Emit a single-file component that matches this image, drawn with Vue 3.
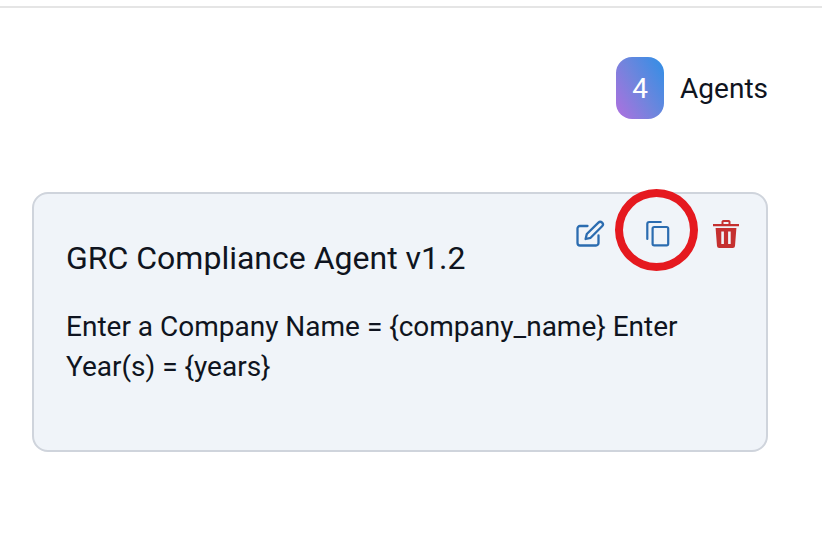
<script setup>
const title = 'GRC Compliance Agent v1.2'
const desc = 'Enter a Company Name = {company_name} Enter Year(s) = {years}'
</script>

<template>
  <div class="page">
    <div class="top-rule"></div>
    <div class="summary">
      <div class="badge">4</div>
      <span class="label">Agents</span>
    </div>
    <div class="card">
      <div class="actions">
        <button class="act edit" aria-label="Edit">
          <svg width="30" height="30" viewBox="0 0 30 30" fill="none" stroke="#2b6cb0" stroke-width="2.3" stroke-linecap="round" stroke-linejoin="round">
            <path d="M12.5 7H5a2.5 2.5 0 0 0-2.5 2.5V24A2.5 2.5 0 0 0 5 26.5H21a2.5 2.5 0 0 0 2.5-2.5V16.5"/>
            <path d="M23.4 3.6a2.6 2.6 0 0 1 3.7 3.7L15.6 18.8 10.6 20l1.2-5z"/>
          </svg>
        </button>
        <button class="act copy" aria-label="Copy">
          <svg width="30" height="30" viewBox="0 0 30 30" fill="none" stroke="#2b6cb0" stroke-width="2.2" stroke-linecap="round" stroke-linejoin="round">
            <rect x="9.6" y="8" width="15.6" height="18.4" rx="1.6"/>
            <path d="M4.3 20V5a2 2 0 0 1 2-2h11.5"/>
          </svg>
        </button>
        <button class="act trash" aria-label="Delete">
          <svg width="30" height="30" viewBox="0 0 30 30">
            <path fill="#c53030" d="M10.5 2.5A1.8 1.8 0 0 1 12.3 1h5.4a1.8 1.8 0 0 1 1.8 1.5V5H28v2.2H2V5h8.5zM12.5 3v2h5V3z"/>
            <path fill="#c53030" fill-rule="evenodd" d="M4.6 9h20.8l-1.4 18a2.2 2.2 0 0 1-2.2 2H8.2A2.2 2.2 0 0 1 6 27zM10.3 12.5v12.5h2.6V12.5zm6.8 0v12.5h2.6V12.5z"/>
          </svg>
        </button>
      </div>
      <h2 class="title">{{ title }}</h2>
      <p class="desc">{{ desc }}</p>
    </div>
    <div class="ring"></div>
  </div>
</template>

<style scoped>
.page {
  position: relative;
  width: 822px;
  height: 534px;
  overflow: hidden;
  background: #fff;
  font-family: Roboto, "Liberation Sans", sans-serif;
  color: #0f1420;
}
.top-rule {
  height: 2px;
  margin-top: 6px;
  background: #e5e5e5;
}
.summary {
  display: flex;
  justify-content: flex-end;
  align-items: center;
  gap: 16px;
  margin-top: 49px;
  padding-right: 54px;
}
.badge {
  width: 48px;
  height: 62px;
  border-radius: 16px;
  display: flex;
  align-items: center;
  justify-content: center;
  color: #fff;
  font-size: 28px;
  background: linear-gradient(60deg, #b06fdf 0%, #6f85dd 50%, #2f8fe6 100%);
}
.label {
  font-size: 28px;
  line-height: 36px;
  padding-top: 2px;
}
.card {
  box-sizing: border-box;
  position: relative;
  width: 736px;
  height: 260px;
  margin: 73px 0 0 32px;
  padding: 45px 32px 0;
  background: #f0f4f9;
  border: 2px solid #cfd4dc;
  border-radius: 16px;
}
.actions {
  position: absolute;
  top: 25px;
  right: 25px;
  display: flex;
  gap: 38px;
}
.act {
  padding: 0;
  border: 0;
  background: none;
  display: block;
  width: 30px;
  height: 30px;
}
.title {
  margin: 0;
  font-size: 32px;
  line-height: 38px;
  font-weight: 400;
}
.desc {
  margin: 30px 0 0;
  font-size: 28px;
  line-height: 40px;
  max-width: 660px;
}
.ring {
  position: absolute;
  left: 615px;
  top: 189px;
  width: 83px;
  height: 82px;
  box-sizing: border-box;
  border: 8px solid #e5191f;
  border-radius: 50%;
}
</style>
